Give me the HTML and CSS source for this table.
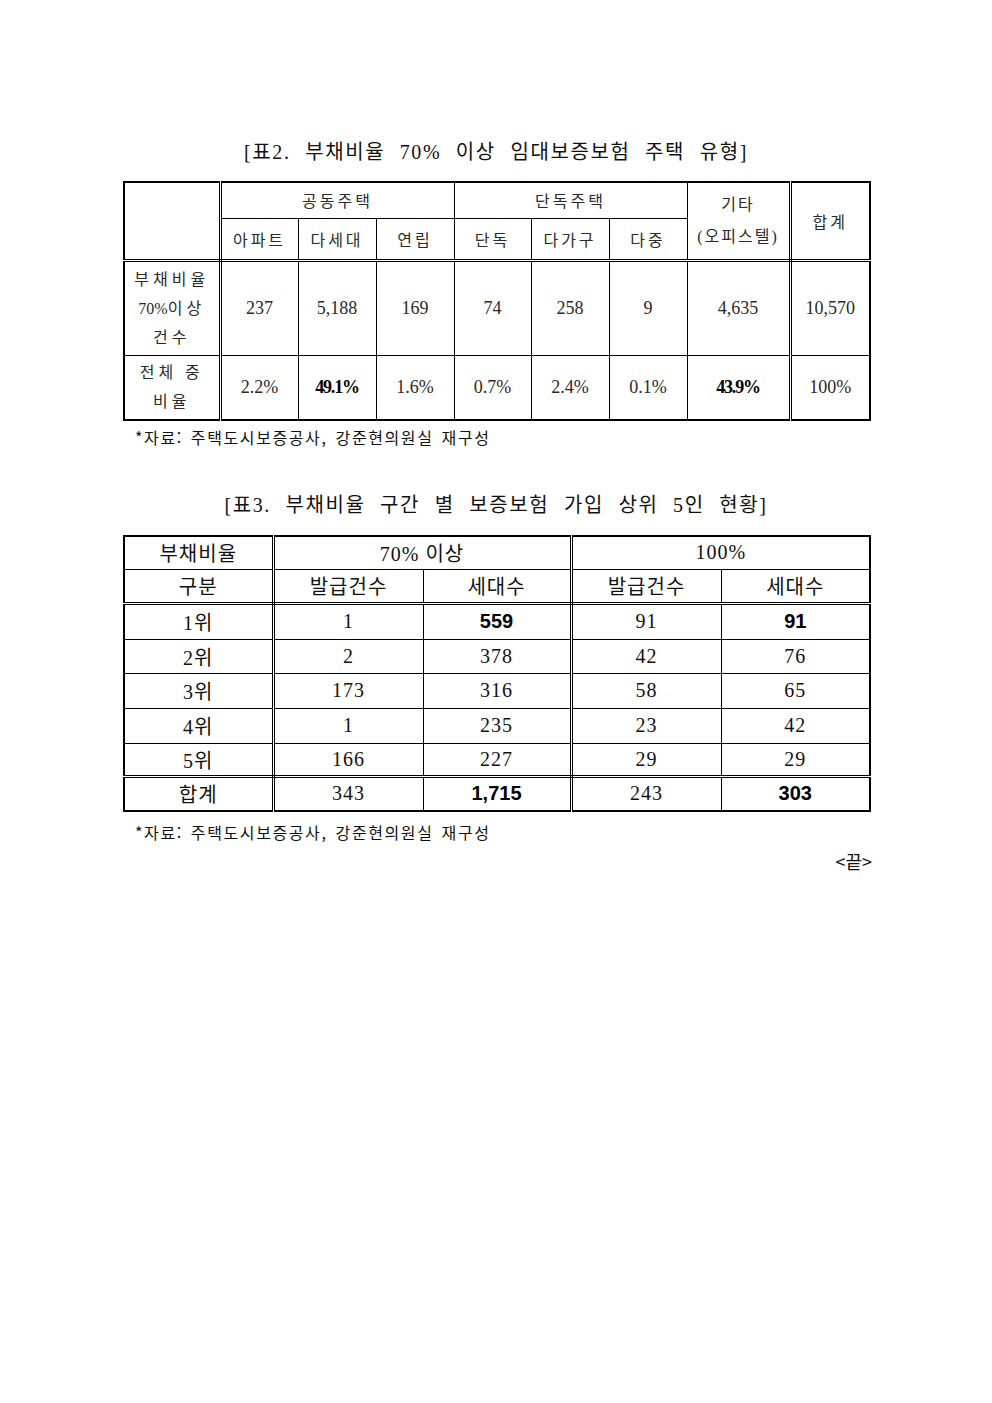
FILE: index.html
```html
<!DOCTYPE html>
<html lang="ko">
<head>
<meta charset="utf-8">
<title>부채비율 보증보험 현황</title>
<link rel="stylesheet" href="styles.css">
</head>
<body>
<div class="page">
  <div class="title">[표2. 부채비율 70% 이상 임대보증보험 주택 유형]</div>
  <table class="t2">
    <colgroup>
      <col class="w96"><col class="w78"><col class="w78"><col class="w78"><col class="w77"><col class="w78"><col class="w78"><col class="w103"><col class="w80">
    </colgroup>
    <tr class="h36">
      <td rowspan="2" class="dr db"></td>
      <td colspan="3">공동주택</td>
      <td colspan="3">단독주택</td>
      <td rowspan="2" class="db dr two">기타<br>(오피스텔)</td>
      <td rowspan="2" class="db">합계</td>
    </tr>
    <tr class="h42">
      <td class="db">아파트</td>
      <td class="db">다세대</td>
      <td class="db">연립</td>
      <td class="db">단독</td>
      <td class="db">다가구</td>
      <td class="db">다중</td>
    </tr>
    <tr class="h95">
      <td class="dr lines">부채비율<br><span class="ns">70%</span>이상<br>건수</td>
      <td class="n">237</td>
      <td class="n">5,188</td>
      <td class="n">169</td>
      <td class="n">74</td>
      <td class="n">258</td>
      <td class="n">9</td>
      <td class="n dr">4,635</td>
      <td class="n">10,570</td>
    </tr>
    <tr class="h65">
      <td class="dr lines">전체 중<br>비율</td>
      <td class="n">2.2%</td>
      <td class="b">49.1%</td>
      <td class="n">1.6%</td>
      <td class="n">0.7%</td>
      <td class="n">2.4%</td>
      <td class="n">0.1%</td>
      <td class="b dr">43.9%</td>
      <td class="n">100%</td>
    </tr>
  </table>
  <div class="source">*자료: 주택도시보증공사, 강준현의원실 재구성</div>

  <div class="title title3">[표3. 부채비율 구간 별 보증보험 가입 상위 5인 현황]</div>
  <table class="t3">
    <colgroup>
      <col class="w149"><col class="w150"><col class="w148"><col class="w150"><col class="w149">
    </colgroup>
    <tr class="r33">
      <td class="dr">부채비율</td>
      <td colspan="2" class="dr">70% 이상</td>
      <td colspan="2">100%</td>
    </tr>
    <tr class="r34">
      <td class="dr db">구분</td>
      <td class="db">발급건수</td>
      <td class="db dr">세대수</td>
      <td class="db">발급건수</td>
      <td class="db">세대수</td>
    </tr>
    <tr class="r36">
      <td class="dr">1위</td><td>1</td><td class="dr b3">559</td><td>91</td><td class="b3">91</td>
    </tr>
    <tr class="r34">
      <td class="dr">2위</td><td>2</td><td class="dr">378</td><td>42</td><td>76</td>
    </tr>
    <tr class="r35">
      <td class="dr">3위</td><td>173</td><td class="dr">316</td><td>58</td><td>65</td>
    </tr>
    <tr class="r35">
      <td class="dr">4위</td><td>1</td><td class="dr">235</td><td>23</td><td>42</td>
    </tr>
    <tr class="r33">
      <td class="dr db">5위</td><td class="db">166</td><td class="dr db">227</td><td class="db">29</td><td class="db">29</td>
    </tr>
    <tr class="r35">
      <td class="dr">합계</td><td>343</td><td class="dr b3">1,715</td><td>243</td><td class="b3">303</td>
    </tr>
  </table>
  <div class="source source3">*자료: 주택도시보증공사, 강준현의원실 재구성</div>
  <div class="end">&lt;끝&gt;</div>
</div>
</body>
</html>
```

FILE: styles.css
```css
html, body {
  margin: 0;
  padding: 0;
  background: #ffffff;
}

.page {
  width: 992px;
  padding-top: 137px;
  box-sizing: border-box;
  color: #111111;
  font-family: "Liberation Serif", "Noto Sans CJK KR", serif;
}

.title {
  width: 746px;
  margin-left: 123px;
  text-align: center;
  font-size: 20px;
  line-height: 30px;
  letter-spacing: 1.6px;
  word-spacing: 8px;
  margin-bottom: 14px;
}

.title3 {
  margin-top: 43px;
  margin-bottom: 15px;
}

table {
  margin-left: 123px;
  width: 745px;
  table-layout: fixed;
  border-collapse: collapse;
  border: 2px solid #000;
}

td {
  border: 1px solid #000;
  padding: 0;
  text-align: center;
  vertical-align: middle;
}

td.dr { border-right: 3px double #000; }
td.db { border-bottom: 3px double #000; }

col.w96 { width: 96px; }
col.w78 { width: 78px; }
col.w77 { width: 77px; }
col.w103 { width: 103px; }
col.w80 { width: 80px; }
col.w149 { width: 149px; }
col.w150 { width: 150px; }
col.w148 { width: 148px; }

/* table 2 */
.t2 td {
  font-size: 16px;
  letter-spacing: 3px;
  color: #2a2a2a;
}

.t2 tr.h36 { height: 36px; }
.t2 tr.h42 { height: 42px; }
.t2 tr.h95 { height: 95px; }
.t2 tr.h65 { height: 65px; }

.t2 td.two { line-height: 32px; letter-spacing: 2px; }
.t2 td.lines { line-height: 29px; letter-spacing: 4px; }
.t2 .ns { letter-spacing: 0; }

.t2 td.n {
  font-size: 18px;
  letter-spacing: 0;
}

.t2 td.b {
  font-size: 18px;
  font-weight: 700;
  letter-spacing: -1.2px;
  color: #000;
}

/* table 3 */
.t3 td {
  font-size: 20px;
  letter-spacing: 1px;
}

.t3 tr.r33 { height: 33px; }
.t3 tr.r34 { height: 34px; }
.t3 tr.r35 { height: 35px; }
.t3 tr.r36 { height: 36px; }

.t3 td.b3 {
  font-family: "Liberation Sans", "Noto Sans CJK KR", sans-serif;
  font-weight: 700;
  letter-spacing: 0;
  color: #000;
}

.source {
  margin-left: 135px;
  margin-top: 6px;
  font-family: "Noto Sans CJK KR", "Liberation Sans", sans-serif;
  font-size: 16px;
  line-height: 20px;
  letter-spacing: 1.6px;
  word-spacing: 2px;
}

.source3 {
  margin-top: 10px;
}

.end {
  width: 872px;
  margin-top: 9px;
  text-align: right;
  font-family: "Noto Sans CJK KR", "Liberation Sans", sans-serif;
  font-size: 18px;
  line-height: 20px;
}
```
